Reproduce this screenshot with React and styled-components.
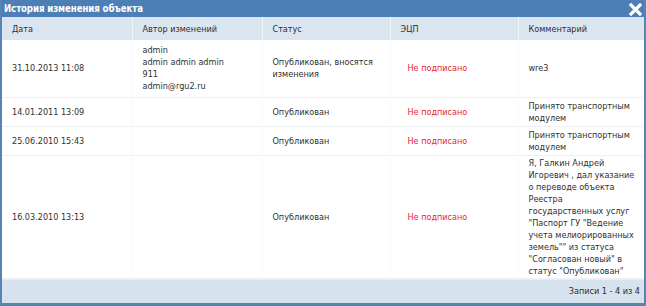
import React from 'react';
import styled, { createGlobalStyle } from 'styled-components';

const Global = createGlobalStyle`
  html, body { margin: 0; padding: 0; background: #fff; }
  body {
    font-family: "DejaVu Sans Condensed", "DejaVu Sans", Verdana, sans-serif;
    font-stretch: condensed;
    font-size: 9px;
    color: #2f2f2f;
  }
`;

const rows = [
  {
    date: '31.10.2013 11:08',
    author: ['admin', 'admin admin admin', '911', 'admin@rgu2.ru'],
    status: ['Опубликован, вносятся', 'изменения'],
    comment: ['wre3'],
    height: 57,
  },
  {
    date: '14.01.2011 13:09',
    author: [],
    status: ['Опубликован'],
    comment: ['Принято транспортным', 'модулем'],
    height: 29,
  },
  {
    date: '25.06.2010 15:43',
    author: [],
    status: ['Опубликован'],
    comment: ['Принято транспортным', 'модулем'],
    height: 29,
  },
  {
    date: '16.03.2010 13:13',
    author: [],
    status: ['Опубликован'],
    comment: [
      'Я, Галкин Андрей',
      'Игоревич , дал указание',
      'о переводе объекта',
      'Реестра',
      'государственных услуг',
      '"Паспорт ГУ "Ведение',
      'учета мелиорированных',
      'земель"" из статуса',
      '"Согласован новый" в',
      'статус "Опубликован"',
    ],
    height: 123,
  },
];

function App() {
  return (
    <>
      <Global />
      <Window>
        <TitleBar>
          <Title>История изменения объекта</Title>
          <Close aria-label="Закрыть">
            <svg width="13" height="13" viewBox="0 0 13 13">
              <path d="M2 2 L11 11 M11 2 L2 11" stroke="#fff" strokeWidth="3.2" strokeLinecap="square" />
            </svg>
          </Close>
        </TitleBar>
        <Table>
          <colgroup>
            <col style={{ width: 130 }} />
            <col style={{ width: 130 }} />
            <col style={{ width: 128 }} />
            <col style={{ width: 128 }} />
            <col />
          </colgroup>
          <thead>
            <tr>
              <Th>Дата</Th>
              <Th>Автор изменений</Th>
              <Th>Статус</Th>
              <Th>ЭЦП</Th>
              <Th last>Комментарий</Th>
            </tr>
          </thead>
          <tbody>
            {rows.map((r) => (
              <Row key={r.date} h={r.height}>
                <Td>{r.date}</Td>
                <Td>
                  {r.author.map((l) => (
                    <Line key={l}>{l}</Line>
                  ))}
                </Td>
                <Td>
                  {r.status.map((l) => (
                    <Line key={l}>{l}</Line>
                  ))}
                </Td>
                <Td sign>Не подписано</Td>
                <Td last>
                  {r.comment.map((l) => (
                    <Line key={l}>{l}</Line>
                  ))}
                </Td>
              </Row>
            ))}
          </tbody>
        </Table>
        <Footer>Записи 1 - 4 из 4</Footer>
      </Window>
    </>
  );
}

const Window = styled.div`
  width: 646px;
  height: 306px;
  box-sizing: border-box;
  display: flex;
  flex-direction: column;
  border: 2px solid #5884b3;
  border-top: none;
  border-bottom-width: 3px;
  background: #fff;
  overflow: hidden;
`;

const TitleBar = styled.div`
  height: 17px;
  flex: none;
  margin: 0 -2px;
  padding: 0 4px 0 4px;
  background: #4b7fb5;
  display: flex;
  align-items: center;
  justify-content: space-between;
`;

const Title = styled.div`
  color: #fff;
  font-weight: bold;
  font-size: 9.6px;
  letter-spacing: -0.1px;
`;

const Close = styled.div`
  display: flex;
  align-items: center;
  margin-top: 1px;
`;

const Table = styled.table`
  width: 100%;
  border-collapse: collapse;
  table-layout: fixed;
  flex: none;
`;

const Th = styled.th`
  height: 23px;
  padding: 0 10px;
  text-align: left;
  font-weight: normal;
  background: #dbe5f0;
  color: #2f2f2f;
  border-right: ${(p) => (p.last ? 'none' : '1px solid #eef3f8')};
  white-space: nowrap;
`;

const Row = styled.tr`
  height: ${(p) => p.h}px;
  border-bottom: 1px solid #eef1f4;
`;

const Td = styled.td`
  padding: 1px 10px 1px ${(p) => (p.sign ? 17 : 10)}px;
  line-height: 12px;
  vertical-align: middle;
  white-space: nowrap;
  color: ${(p) => (p.sign ? '#e5262e' : '#2f2f2f')};
  border-right: ${(p) => (p.last ? 'none' : '1px solid #f7f9fb')};
`;

const Line = styled.div``;

const Footer = styled.div`
  flex: 1;
  background: #d6e2ee;
  display: flex;
  align-items: center;
  justify-content: flex-end;
  padding: 0 4px 1px 0;
  border-top: 1px solid #e6eef6;
`;

export default App;
